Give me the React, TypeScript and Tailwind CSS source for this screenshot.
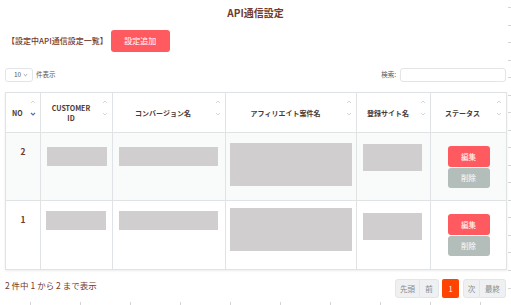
const FONT = "font-['Noto_Sans_CJK_JP','Noto_Sans',sans-serif]";

type Block = { pl: number; mt: number; w: number; h: number };

type Row = {
  no: string;
  bg: string;
  cust: Block;
  conv: Block;
  affi: Block;
  site: Block;
};

const ROWS: Row[] = [
  {
    no: "2",
    bg: "bg-[#f9fafa]",
    cust: { pl: 6, mt: 14, w: 60, h: 19 },
    conv: { pl: 6, mt: 14, w: 99, h: 19 },
    affi: { pl: 4, mt: 10, w: 122, h: 43 },
    site: { pl: 6, mt: 11, w: 59, h: 27 },
  },
  {
    no: "1",
    bg: "bg-white",
    cust: { pl: 5, mt: 10, w: 60, h: 19 },
    conv: { pl: 6, mt: 10, w: 99, h: 19 },
    affi: { pl: 4, mt: 7, w: 122, h: 43 },
    site: { pl: 6, mt: 12, w: 59, h: 27 },
  },
];

function SortIcon({ active }: { active?: boolean }) {
  return (
    <span className="absolute right-[4px] top-[7px] flex flex-col gap-[8px]">
      <svg width="6" height="4" viewBox="0 0 6 4" fill="none">
        <path d="M1 3L3 1L5 3" stroke="#cfd3d6" strokeWidth="0.9" />
      </svg>
      <svg width="6" height="4" viewBox="0 0 6 4" fill="none">
        <path
          d="M1 1L3 3L5 1"
          stroke={active ? "#4f74b3" : "#cfd3d6"}
          strokeWidth={active ? 1.2 : 0.9}
        />
      </svg>
    </span>
  );
}

function GrayBlock({ b }: { b: Block }) {
  return (
    <div style={{ paddingLeft: b.pl, paddingTop: b.mt }}>
      <div className="bg-[#d1cecf]" style={{ width: b.w, height: b.h }} />
    </div>
  );
}

const headCell =
  "relative flex items-center border-r border-[#dfe3e6] text-[7px] font-bold leading-[10px] text-[#4b3833]";

export default function App() {
  return (
    <div className={`relative h-[305px] w-[511px] overflow-hidden bg-white ${FONT}`}>
      <h1 className="pt-[6px] text-center text-[10px] font-bold leading-[14px] text-[#723a2c]">
        API通信設定
      </h1>

      <div className="mt-[10px] flex items-center pl-[7px]">
        <span className="text-[8px] font-medium leading-[10px] text-[#723a2c]">
          【設定中API通信設定一覧】
        </span>
        <button
          type="button"
          className="ml-[3px] flex h-[22px] w-[59px] items-center justify-center rounded-[3px] bg-[#ff5a5f] text-[8px] text-white"
        >
          設定追加
        </button>
      </div>

      <div className="mt-[16px] flex items-center justify-between pl-[5px] pr-[5px]">
        <div className="flex items-center">
          <div className="flex h-[14px] w-[28px] items-center rounded-[3px] border border-[#e2e5e8] pl-[8px] text-[6.5px] text-[#555]">
            10
            <svg width="5" height="4" viewBox="0 0 5 4" className="ml-[2px]" fill="none">
              <path d="M0.8 1.2L2.5 2.8L4.2 1.2" stroke="#888" strokeWidth="0.8" />
            </svg>
          </div>
          <span className="ml-[3px] text-[6.5px] text-[#555]">件表示</span>
        </div>
        <div className="flex items-center">
          <span className="text-[6.5px] text-[#555]">検索:</span>
          <div className="ml-[4px] h-[14px] w-[106px] rounded-[3px] border border-[#e2e5e8]" />
        </div>
      </div>

      <div className="ml-[5px] mt-[10px] w-[502px] border border-r-0 border-[#dfe3e6] shadow-[0_1px_2px_rgba(0,0,0,0.08)]">
        <div className="grid h-[40px] grid-cols-[35px_72px_113px_131px_74px_76px] border-b border-[#dfe3e6]">
          <div className={`${headCell} pl-[6px]`}>
            NO
            <SortIcon active />
          </div>
          <div className={`${headCell} justify-center pr-[11px] text-center`}>
            CUSTOMER
            <br />
            ID
            <SortIcon />
          </div>
          <div className={`${headCell} justify-center pr-[12px]`}>
            コンバージョン名
            <SortIcon />
          </div>
          <div className={`${headCell} justify-center pr-[11px]`}>
            アフィリエイト案件名
            <SortIcon />
          </div>
          <div className={`${headCell} justify-center pr-[11px]`}>
            登録サイト名
            <SortIcon />
          </div>
          <div className={`${headCell} justify-center pr-[12px]`}>
            ステータス
            <SortIcon />
          </div>
        </div>

        {ROWS.map((r, i) => (
          <div
            key={r.no}
            className={`grid h-[68px] grid-cols-[35px_72px_113px_131px_74px_76px] ${r.bg} ${
              i < ROWS.length - 1 ? "border-b border-[#dfe3e6]" : ""
            }`}
          >
            <div className="border-r border-[#dfe3e6] pt-[12px] text-center text-[8.5px] font-bold leading-[12px] text-[#723a2c]">
              {r.no}
            </div>
            <div className="border-r border-[#dfe3e6]">
              <GrayBlock b={r.cust} />
            </div>
            <div className="border-r border-[#dfe3e6]">
              <GrayBlock b={r.conv} />
            </div>
            <div className="border-r border-[#dfe3e6]">
              <GrayBlock b={r.affi} />
            </div>
            <div className="border-r border-[#dfe3e6]">
              <GrayBlock b={r.site} />
            </div>
            <div className="flex flex-col items-center border-r border-[#dfe3e6] pt-[13px]">
              <button
                type="button"
                className="flex h-[21px] w-[42px] items-center justify-center rounded-[3px] bg-[#ff5a5f] text-[7.5px] text-white"
              >
                編集
              </button>
              <button
                type="button"
                className="mt-[1px] flex h-[20px] w-[42px] items-center justify-center rounded-[3px] bg-[#b3bdba] text-[7.5px] text-white"
              >
                削除
              </button>
            </div>
          </div>
        ))}
      </div>

      <div className="mt-[9px] flex items-start justify-between pl-[5px] pr-[5px]">
        <span className="pt-[1px] text-[8.5px] leading-[10px] text-[#723a2c]">
          2 件中 1 から 2 まで表示
        </span>
        <div className="flex items-center text-[7.5px] text-[#8a8a8a]">
          <div className="flex">
            <span className="flex h-[19px] w-[25px] items-center justify-center rounded-l-[3px] border border-[#e3e6e8] bg-[#eef0f1]">
              先頭
            </span>
            <span className="flex h-[19px] w-[19px] items-center justify-center rounded-r-[3px] border border-l-0 border-[#e3e6e8] bg-[#eef0f1]">
              前
            </span>
          </div>
          <span className="ml-[3px] flex h-[19px] w-[17px] items-center justify-center rounded-[2px] bg-[#ff4300] text-white">
            1
          </span>
          <div className="ml-[4px] flex">
            <span className="flex h-[19px] w-[17px] items-center justify-center rounded-l-[3px] border border-[#e3e6e8] bg-[#eef0f1]">
              次
            </span>
            <span className="flex h-[19px] w-[26px] items-center justify-center rounded-r-[3px] border border-l-0 border-[#e3e6e8] bg-[#eef0f1]">
              最終
            </span>
          </div>
        </div>
      </div>

      {/* ruler marks */}
      <div className="pointer-events-none absolute right-0 top-0 flex h-full flex-col pt-[7px]">
        {Array.from({ length: 17 }).map((_, i) => (
          <div key={i} className="mb-[17.1px] h-px w-[3px] bg-[#d4d4d4]" />
        ))}
      </div>
      <div className="pointer-events-none absolute bottom-0 left-[30px] flex">
        {Array.from({ length: 10 }).map((_, i) => (
          <div key={i} className="mr-[49px] h-[3px] w-px bg-[#d4d4d4]" />
        ))}
      </div>
    </div>
  );
}
